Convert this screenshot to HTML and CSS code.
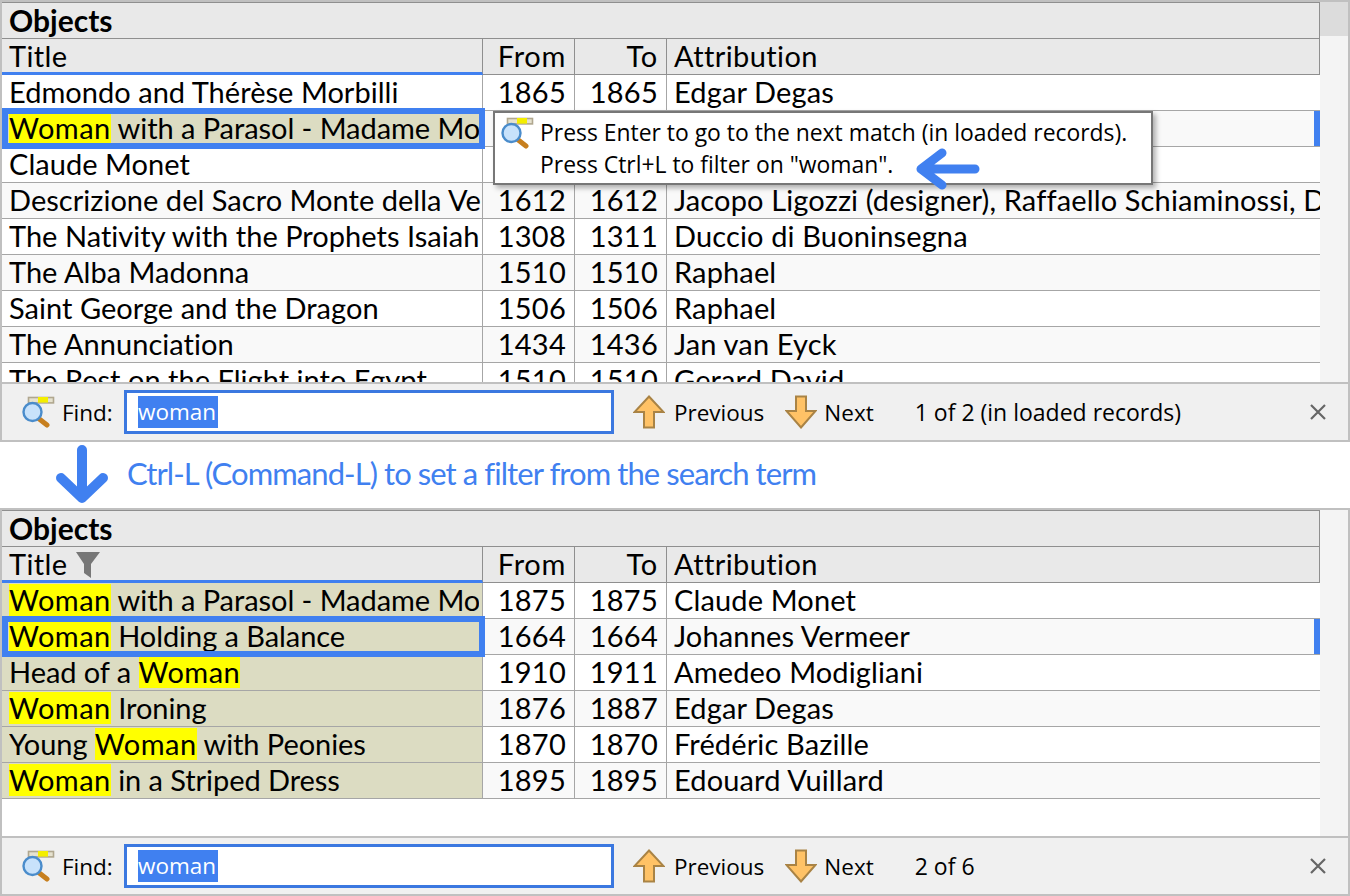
FILE: index.html
```html
<!DOCTYPE html>
<html lang="en">
<head>
<meta charset="utf-8">
<title>Objects find bar</title>
<link rel="stylesheet" href="styles.css">
</head>
<body>
<svg class="defs" width="0" height="0" aria-hidden="true">
  <defs>
    <symbol id="find" viewBox="0 0 33 32">
      <rect x="6.5" y="1.5" width="25" height="5.4" fill="#e6e2cf" stroke="#b0a78f" stroke-width="1.6"/>
      <rect x="16" y="1" width="10" height="5.6" fill="#f4ee00"/>
      <path d="M16 22 L25 29" stroke="#c77f1e" stroke-width="5" stroke-linecap="round"/>
      <circle cx="10.5" cy="16" r="9" fill="#c8e2fb" stroke="#4a8ccb" stroke-width="2.4"/>
    </symbol>
    <symbol id="up" viewBox="0 0 32 34">
      <path d="M16 1.5 L30.5 17 H21 V32.5 H11 V17 H1.5 Z" fill="#ffc266" stroke="#a98345" stroke-width="2"/>
    </symbol>
    <symbol id="down" viewBox="0 0 32 34">
      <path d="M16 32.5 L30.5 16 H21 V1.5 H11 V16 H1.5 Z" fill="#ffc266" stroke="#a98345" stroke-width="2"/>
    </symbol>
    <symbol id="close" viewBox="0 0 16 16">
      <path d="M1 1 L15 15 M15 1 L1 15" stroke="#666" stroke-width="2.2" fill="none"/>
    </symbol>
  </defs>
</svg>

<section class="panel panel-top">
  <div class="main">
    <div class="table">
      <div class="caption">Objects</div>
      <div class="row head">
        <div class="cell sorted">Title</div><div class="cell num">From</div><div class="cell num">To</div><div class="cell last">Attribution</div>
      </div>
      <div class="row"><div class="cell">Edmondo and Thérèse Morbilli</div><div class="cell num">1865</div><div class="cell num">1865</div><div class="cell last">Edgar Degas</div></div>
      <div class="row even current"><div class="cell match"><span class="clip"><mark>Woman</mark> with a Parasol - Madame Monet and Her Son</span><span class="ring"></span></div><div class="cell num">1875</div><div class="cell num">1875</div><div class="cell last">Claude Monet</div></div>
      <div class="row"><div class="cell">Claude Monet</div><div class="cell num"></div><div class="cell num"></div><div class="cell last"></div></div>
      <div class="row even"><div class="cell">Descrizione del Sacro Monte della Vernia</div><div class="cell num">1612</div><div class="cell num">1612</div><div class="cell last">Jacopo Ligozzi (designer), Raffaello Schiaminossi, Domenico Falcini</div></div>
      <div class="row"><div class="cell">The Nativity with the Prophets Isaiah and Ezekiel</div><div class="cell num">1308</div><div class="cell num">1311</div><div class="cell last">Duccio di Buoninsegna</div></div>
      <div class="row even"><div class="cell">The Alba Madonna</div><div class="cell num">1510</div><div class="cell num">1510</div><div class="cell last">Raphael</div></div>
      <div class="row"><div class="cell">Saint George and the Dragon</div><div class="cell num">1506</div><div class="cell num">1506</div><div class="cell last">Raphael</div></div>
      <div class="row even"><div class="cell">The Annunciation</div><div class="cell num">1434</div><div class="cell num">1436</div><div class="cell last">Jan van Eyck</div></div>
      <div class="row"><div class="cell">The Rest on the Flight into Egypt</div><div class="cell num">1510</div><div class="cell num">1510</div><div class="cell last">Gerard David</div></div>
    </div>
    <div class="scrollbar"><div class="thumb"></div></div>
  </div>
  <div class="findbar">
    <svg class="find-icon"><use href="#find"/></svg>
    <span class="find-label">Find:</span>
    <div class="find-input"><span class="selected">woman</span></div>
    <svg class="nav-icon nav-prev"><use href="#up"/></svg><span class="nav-label">Previous</span>
    <svg class="nav-icon nav-next"><use href="#down"/></svg><span class="nav-label nav-label-next">Next</span>
    <span class="status">1 of 2 (in loaded records)</span>
    <svg class="close-icon"><use href="#close"/></svg>
  </div>
  <div class="tooltip">
    <svg class="tip-icon"><use href="#find"/></svg>
    <p class="tip-line">Press Enter to go to the next match (in loaded records).</p>
    <p class="tip-line">Press Ctrl+L to filter on "woman".</p>
    <svg class="tip-arrow" viewBox="0 0 66 42"><path d="M60 21 H8 M27 5 L6 21 L27 37" fill="none" stroke="#4080f0" stroke-width="9" stroke-linecap="round" stroke-linejoin="round"/></svg>
  </div>
</section>

<div class="note">
  <svg class="note-arrow" viewBox="0 0 52 60"><path d="M26 5 V53 M5 33 L26 53 L47 33" fill="none" stroke="#4080f0" stroke-width="10" stroke-linecap="round" stroke-linejoin="round"/></svg>
  <span class="note-text">Ctrl-L (Command-L) to set a filter from the search term</span>
</div>

<section class="panel panel-bottom">
  <div class="main">
    <div class="table">
      <div class="caption">Objects</div>
      <div class="row head">
        <div class="cell sorted">Title <svg class="funnel" viewBox="0 0 24 26"><path d="M0 0 H24 L15 12 V26 L8 21 V12 Z" fill="#777"/></svg></div><div class="cell num">From</div><div class="cell num">To</div><div class="cell last">Attribution</div>
      </div>
      <div class="row"><div class="cell match"><span class="clip"><mark>Woman</mark> with a Parasol - Madame Monet and Her Son</span></div><div class="cell num">1875</div><div class="cell num">1875</div><div class="cell last">Claude Monet</div></div>
      <div class="row even current"><div class="cell match"><span class="clip"><mark>Woman</mark> Holding a Balance</span><span class="ring"></span></div><div class="cell num">1664</div><div class="cell num">1664</div><div class="cell last">Johannes Vermeer</div></div>
      <div class="row"><div class="cell match"><span class="clip">Head of a <mark>Woman</mark></span></div><div class="cell num">1910</div><div class="cell num">1911</div><div class="cell last">Amedeo Modigliani</div></div>
      <div class="row even"><div class="cell match"><span class="clip"><mark>Woman</mark> Ironing</span></div><div class="cell num">1876</div><div class="cell num">1887</div><div class="cell last">Edgar Degas</div></div>
      <div class="row"><div class="cell match"><span class="clip">Young <mark>Woman</mark> with Peonies</span></div><div class="cell num">1870</div><div class="cell num">1870</div><div class="cell last">Frédéric Bazille</div></div>
      <div class="row even"><div class="cell match"><span class="clip"><mark>Woman</mark> in a Striped Dress</span></div><div class="cell num">1895</div><div class="cell num">1895</div><div class="cell last">Edouard Vuillard</div></div>
    </div>
    <div class="scrollbar"></div>
  </div>
  <div class="findbar">
    <svg class="find-icon"><use href="#find"/></svg>
    <span class="find-label">Find:</span>
    <div class="find-input"><span class="selected">woman</span></div>
    <svg class="nav-icon nav-prev"><use href="#up"/></svg><span class="nav-label">Previous</span>
    <svg class="nav-icon nav-next"><use href="#down"/></svg><span class="nav-label nav-label-next">Next</span>
    <span class="status">2 of 6</span>
    <svg class="close-icon"><use href="#close"/></svg>
  </div>
</section>
</body>
</html>
```
FILE: styles.css
```css
* { box-sizing: border-box; }
html, body { margin: 0; padding: 0; }
body {
  width: 1350px;
  height: 896px;
  overflow: hidden;
  background: #fff;
  font-family: "Lato", "Liberation Sans", sans-serif;
  font-size: 29px;
  font-variant-ligatures: none;
  color: #000;
}
.defs { position: absolute; }

.panel {
  position: relative;
  display: flex;
  flex-direction: column;
  border: 2px solid #c0c0c0;
  border-bottom: 0;
}
.panel-top { height: 442px; }
.panel-bottom { height: 388px; }

.main { flex: 1; display: flex; min-height: 0; }
.table {
  width: 1318px;
  overflow: hidden;
  background: #fff;
  border-top: 1px solid #8f8f8f;
}
.scrollbar { flex: 1; background: #f4f4f4; }
.thumb { height: 34px; background: #dcdcdc; }

.caption {
  height: 36px;
  line-height: 35px;
  padding-left: 7px;
  font-size: 30px;
  font-weight: 700;
  background: #e9e9e9;
  border-bottom: 1px solid #8f8f8f;
  border-right: 1px solid #8f8f8f;
}
.row {
  display: grid;
  grid-template-columns: 481px 92px 92px 653px;
  height: 36px;
  line-height: 33px;
}
.row.even { background: #f9f9f9; }
.cell {
  position: relative;
  height: 36px;
  padding: 0 8px 0 7px;
  white-space: nowrap;
  overflow: hidden;
  letter-spacing: 0.03px;
  border-right: 1px solid #a6a6a6;
  border-bottom: 1px solid #a6a6a6;
}
.cell.num { text-align: right; letter-spacing: 0.25px; }
.cell.last { border-right: 0; letter-spacing: 0.14px; }
.head { background: #e9e9e9; }
.head .cell { border-color: #8f8f8f; letter-spacing: 0.4px; }
.head .cell.num { letter-spacing: 0.7px; }
.head .cell.last { border-right: 1px solid #8f8f8f; }
.head .cell.sorted { border-bottom: 3px solid #4080f0; overflow: visible; }
.funnel { width: 24px; height: 26px; margin-left: 1px; vertical-align: -3px; }

.cell.match { background: #dcdcc2; overflow: visible; }
.clip { display: block; overflow: hidden; margin-right: -5px; letter-spacing: -0.06px; }
mark {
  display: inline-block;
  height: 32px;
  line-height: 32px;
  letter-spacing: 0.5px;
  background: #ffff00;
  color: inherit;
}
.ring {
  position: absolute;
  left: 0;
  right: -3px;
  top: -3px;
  bottom: -3px;
  border: 6px solid #4080f0;
  z-index: 2;
  pointer-events: none;
}
.row.current { position: relative; }
.row.current::after {
  content: "";
  position: absolute;
  right: 0;
  top: 0;
  width: 6px;
  height: 35px;
  background: #4080f0;
}

.findbar {
  height: 60px;
  flex: none;
  margin: 0 -2px;
  display: flex;
  align-items: center;
  padding-left: 20px;
  background: #f0f0f0;
  border: 2px solid #c0c0c0;
  font-family: "Open Sans", "Liberation Sans", sans-serif;
  font-size: 22.5px;
}
.find-icon { width: 33px; height: 32px; flex: none; }
.find-label { margin-left: 7px; width: 62px; }
.find-input {
  width: 490px;
  height: 44px;
  border: 3px solid #3b78e0;
  background: #fff;
  padding-left: 11px;
  display: flex;
  align-items: center;
  flex: none;
}
.selected { background: #4080f0; color: #fff; line-height: 32px; width: 80px; }
.nav-icon { width: 32px; height: 34px; flex: none; }
.nav-prev { margin-left: 19px; }
.nav-next { margin-left: 21px; }
.nav-label { margin-left: 9px; }
.nav-label-next { margin-left: 7px; }
.status { margin-left: 41px; font-size: 23px; }
.close-icon { position: absolute; right: 22px; width: 16px; height: 16px; }

.note {
  height: 66px;
  display: flex;
  align-items: center;
}
.note-arrow { width: 52px; height: 60px; margin-left: 56px; flex: none; }
.note-text {
  margin-left: 19px;
  margin-top: -4px;
  font-family: "Lato", "Liberation Sans", sans-serif;
  font-size: 31px;
  letter-spacing: -0.93px;
  color: #4080f0;
}

.tooltip {
  position: absolute;
  left: 491px;
  top: 109px;
  width: 660px;
  height: 74px;
  padding: 4px 0 0 45px;
  background: #fff;
  border: 2px solid #777;
  box-shadow: 3px 3px 5px rgba(0, 0, 0, 0.3);
  font-family: "Open Sans", "Liberation Sans", sans-serif;
  font-size: 22.9px;
  z-index: 3;
}
.tip-line { margin: 0; line-height: 32px; white-space: nowrap; }
.tip-icon { position: absolute; left: 6px; top: 4px; width: 33px; height: 32px; }
.tip-arrow { position: absolute; left: 420px; top: 35px; width: 66px; height: 42px; }
```
